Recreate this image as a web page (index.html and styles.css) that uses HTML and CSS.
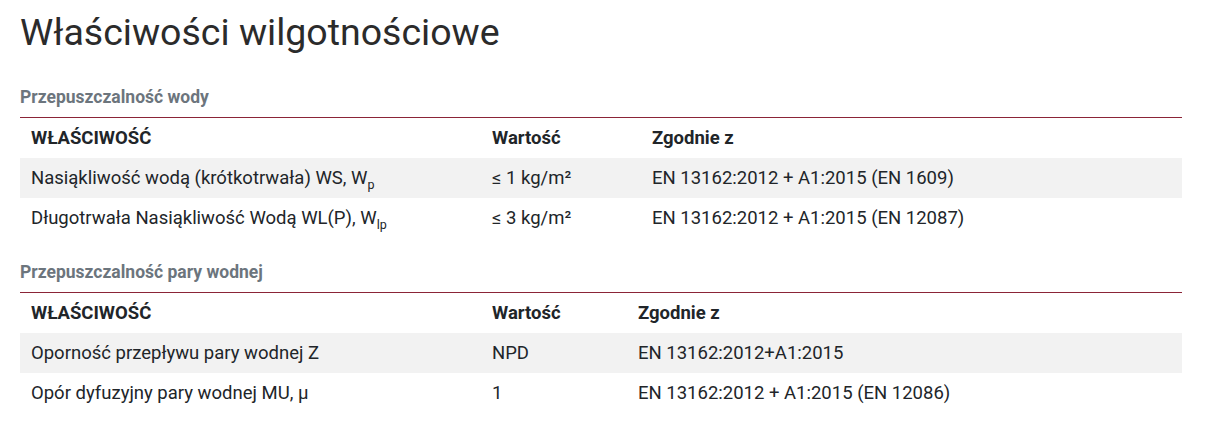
FILE: index.html
```html
<!DOCTYPE html>
<html lang="pl">
<head>
<meta charset="utf-8">
<link rel="stylesheet" href="styles.css">
</head>
<body>
<div class="page">
  <h1 class="title">Właściwości wilgotnościowe</h1>

  <section class="group">
    <h2 class="group-title">Przepuszczalność wody</h2>
    <table class="props props-a">
      <thead>
        <tr><th class="c1">WŁAŚCIWOŚĆ</th><th class="c2">Wartość</th><th class="c3">Zgodnie z</th></tr>
      </thead>
      <tbody>
        <tr><td>Nasiąkliwość wodą (krótkotrwała) WS, W<sub>p</sub></td><td>≤ 1 kg/m²</td><td>EN 13162:2012 + A1:2015 (EN 1609)</td></tr>
        <tr><td>Długotrwała Nasiąkliwość Wodą WL(P), W<sub>lp</sub></td><td>≤ 3 kg/m²</td><td>EN 13162:2012 + A1:2015 (EN 12087)</td></tr>
      </tbody>
    </table>
  </section>

  <section class="group">
    <h2 class="group-title">Przepuszczalność pary wodnej</h2>
    <table class="props props-b">
      <thead>
        <tr><th class="c1">WŁAŚCIWOŚĆ</th><th class="c2">Wartość</th><th class="c3">Zgodnie z</th></tr>
      </thead>
      <tbody>
        <tr><td>Oporność przepływu pary wodnej Z</td><td>NPD</td><td>EN 13162:2012+A1:2015</td></tr>
        <tr><td>Opór dyfuzyjny pary wodnej MU, μ</td><td>1</td><td>EN 13162:2012 + A1:2015 (EN 12086)</td></tr>
      </tbody>
    </table>
  </section>
</div>
</body>
</html>
```

FILE: styles.css
```css
html, body {
  margin: 0;
  padding: 0;
  background: #fff;
}
body {
  font-family: Roboto, "Liberation Sans", sans-serif;
  color: #212529;
}
.page {
  padding: 10px 36px 0 20px;
}
.title {
  font-size: 37.5px;
  font-weight: 400;
  color: #2b2b2b;
  margin: 0 0 33px 0;
  line-height: 44px;
}
.group-title {
  font-size: 17.5px;
  font-weight: 700;
  color: #6c757d;
  margin: 0;
  line-height: 20px;
  padding-bottom: 10px;
}
.props {
  width: 100%;
  border-collapse: collapse;
  border-top: 1px solid #8b2437;
  font-size: 18.5px;
  margin-bottom: 24px;
}
.props th, .props td {
  text-align: left;
  padding: 0 11px;
  height: 40px;
  vertical-align: middle;
}
.props th {
  font-weight: 700;
  color: #212529;
}
.props tbody tr:nth-child(odd) {
  background: #f2f2f2;
}
.props sub {
  font-size: 12.5px;
  line-height: 0;
}
.props-a .c1 { width: 439px; }
.props-a .c2 { width: 138px; }
.props-b .c1 { width: 439px; }
.props-b .c2 { width: 124px; }
```
